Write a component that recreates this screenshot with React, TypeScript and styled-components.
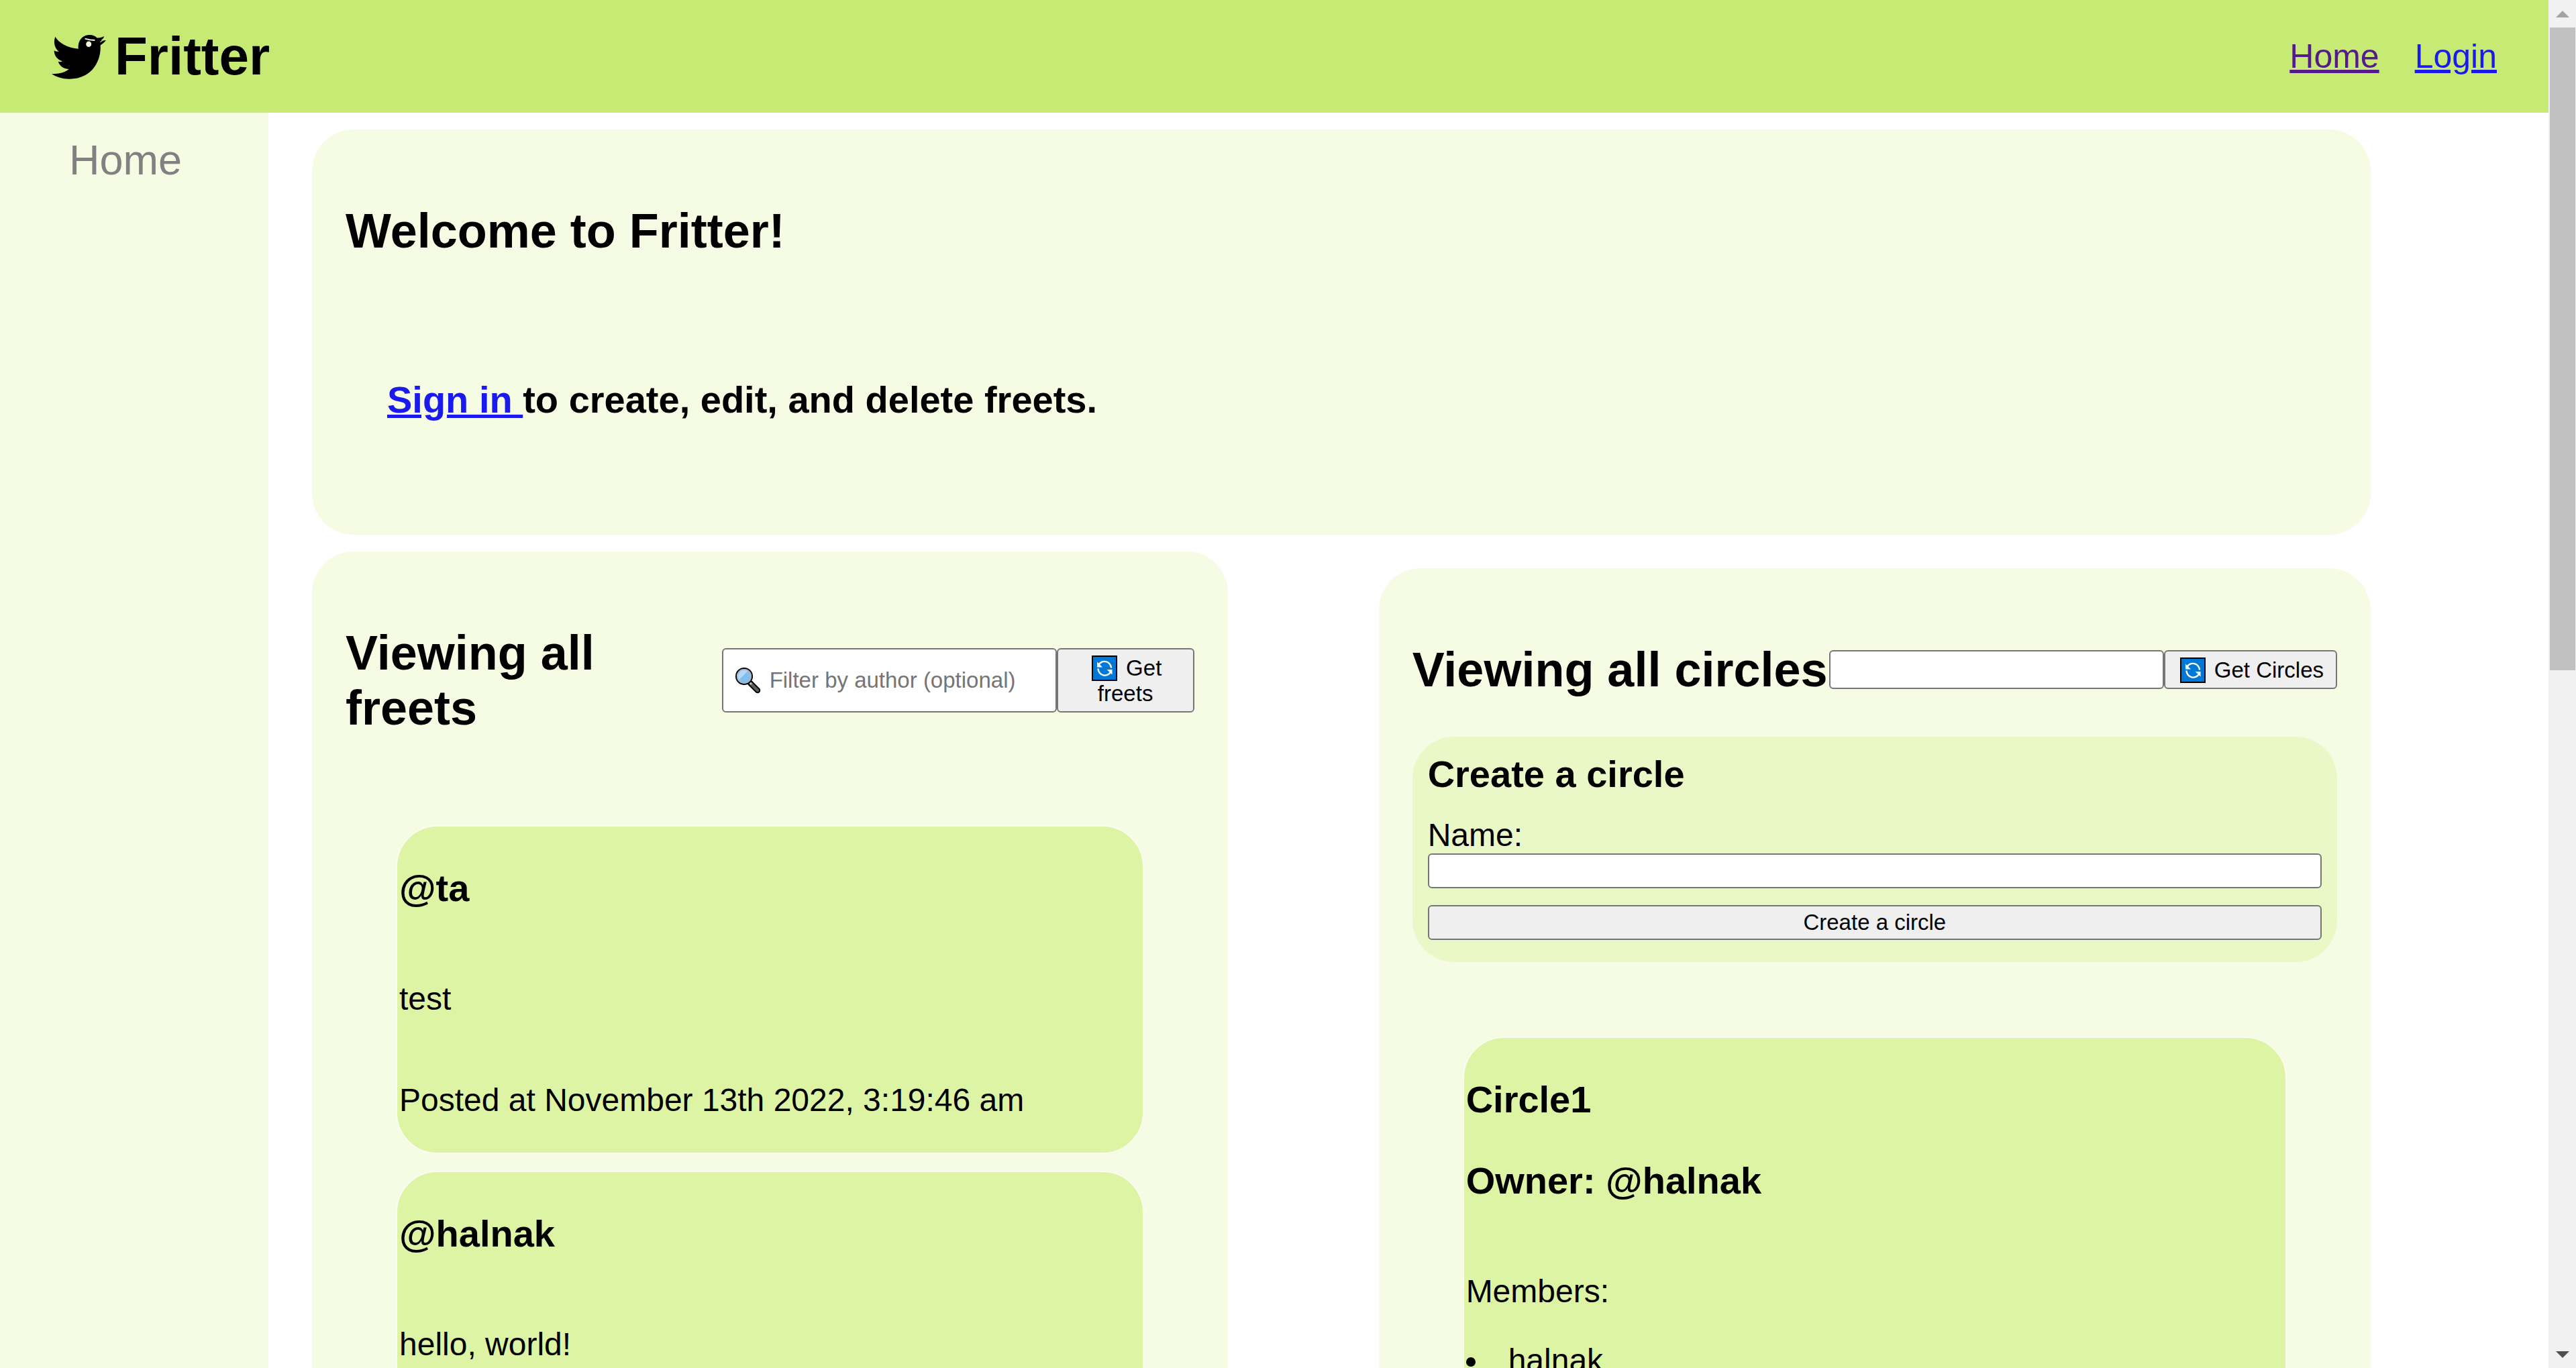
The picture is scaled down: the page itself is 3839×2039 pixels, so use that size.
import React from "react";
import styled, { createGlobalStyle } from "styled-components";

const GlobalStyle = createGlobalStyle`
  * {
    box-sizing: border-box;
  }
  body {
    margin: 0;
    background: #ffffff;
    color: #000000;
    font-family: Arial, "Liberation Sans", Helvetica, sans-serif;
    font-size: 48px;
    line-height: 55px;
  }
`;

const Window = styled.div`
  display: flex;
  height: 100vh;
  overflow: hidden;
`;

const Page = styled.div`
  flex: 1;
  min-width: 0;
  display: flex;
  flex-direction: column;
`;

const Header = styled.header`
  flex: none;
  display: flex;
  align-items: center;
  justify-content: space-between;
  height: 168px;
  padding: 0 77px;
  background: #c6ea74;
`;

const Brand = styled.div`
  display: flex;
  align-items: center;
  gap: 13px;
`;

const BrandName = styled.h1`
  margin: 0;
  font-size: 80px;
  line-height: 92px;
`;

const TopNav = styled.nav`
  display: flex;
  gap: 53px;
  font-size: 50px;
`;

const TextLink = styled.a<{ $visited?: boolean }>`
  color: ${(p) => (p.$visited ? "#551a8b" : "#1a1aee")};
`;

const Body = styled.div`
  flex: 1;
  min-height: 0;
  display: flex;
`;

const Sidebar = styled.aside`
  flex: none;
  width: 400px;
  padding: 34px 103px;
  background: #f6fbe3;
`;

const SideLink = styled.a`
  color: #818181;
  font-size: 63px;
  line-height: 72px;
  text-decoration: none;
`;

const Main = styled.main`
  flex: 1;
  min-width: 0;
  display: flex;
  flex-direction: column;
  gap: 25px;
  padding: 25px 265px 0 65px;
`;

const Card = styled.section`
  padding: 50px;
  border-radius: 62px;
  background: #f6fbe3;
`;

const Columns = styled.div`
  display: grid;
  grid-template-columns: 12fr 13fr;
  gap: 225px;
  align-items: start;
`;

const CirclesCard = styled(Card)`
  margin-top: 25px;
`;

const Title = styled.h2`
  flex: 1;
  margin: 0;
  font-size: 72px;
  line-height: 82px;
`;

const WelcomeTitle = styled(Title)`
  margin: 60px 0;
`;

const Intro = styled.article`
  padding: 62px 62px 63px;
`;

const Subtitle = styled.h3`
  margin: 56px 0;
  font-size: 56px;
  line-height: 65px;
`;

const CardHeader = styled.div`
  display: flex;
  align-items: center;
  margin: 60px 0 59px;
`;

const FilterForm = styled.form`
  display: flex;
`;

const SearchBox = styled.div`
  position: relative;
  display: flex;
  width: 499px;
`;

const SearchMark = styled.span`
  position: absolute;
  top: 0;
  bottom: 0;
  left: 19px;
  display: flex;
  align-items: center;
`;

const TextInput = styled.input<{ $icon?: boolean }>`
  width: 100%;
  min-height: 52px;
  margin: 0;
  padding: 0 5px 0 ${(p) => (p.$icon ? "69px" : "5px")};
  border: 2px solid #767676;
  border-radius: 6px;
  background: #ffffff;
  color: #000000;
  font-family: inherit;
  font-size: 33px;
  line-height: 38px;

  &::placeholder {
    color: #757575;
    opacity: 1;
  }
`;

const Button = styled.button<{ $width?: string }>`
  width: ${(p) => p.$width ?? "100%"};
  padding: 9px 18px 7px;
  border: 2px solid #767676;
  border-radius: 6px;
  background: #efefef;
  color: #000000;
  font-family: inherit;
  font-size: 33px;
  line-height: 38px;
`;

const WideButton = styled(Button)`
  margin-top: 25px;
  padding: 5px 15px;
`;

const RefreshMark = styled.svg`
  width: 38px;
  height: 38px;
  margin: 0 4px;
  vertical-align: -8px;
`;

const CreateForm = styled.form`
  display: flex;
  flex-direction: column;
  padding: 23px 23px 33px;
  border-radius: 62px;
  background: #eaf8c8;
`;

const FormTitle = styled.h3`
  margin: 0 0 31px;
  font-size: 56px;
  line-height: 65px;
`;

const List = styled.div<{ $top?: number }>`
  display: flex;
  flex-direction: column;
  gap: 25px;
  padding: ${(p) => p.$top ?? 75}px 75px 75px;
`;

const Item = styled.article`
  padding: 3px;
  border: 2px solid #fafdf0;
  border-radius: 62px;
  background: #dcf4a3;
`;

const Content = styled.p`
  margin: 105px 0 96px;
`;

const Info = styled.p`
  margin: 0 0 48px;
`;

const Members = styled.ul`
  margin: -48px 0 48px;
  padding: 0;
  list-style: disc inside;
`;

const Scrollbar = styled.div`
  flex: none;
  width: 41px;
  display: flex;
  flex-direction: column;
  justify-content: space-between;
  padding: 0 1px 0 2px;
  background: #f1f1f1;
`;

const Thumb = styled.div`
  height: 47%;
  margin-bottom: auto;
  background: #c1c1c1;
`;

const Arrow = styled.svg`
  flex: none;
  display: block;
  width: 38px;
  height: 41px;
`;

const Bird = () => (
  <svg width="81" height="67" viewBox="50 40 242 200" aria-hidden="true">
    <path d="M66 51C80 78 122 101 169 105C165 68 188 43 219 43C233 43 244 48 252 56C264 57 275 53 284 49C281 58 276 63 269 68C277 69 284 68 292 67C286 75 276 83 267 89C272 150 235 239 128 239C98 239 70 230 50 216C84 216 110 211 127 195C104 196 86 183 79 162C86 164 93 163 98 160C76 153 61 136 61 112C68 117 76 117 82 117C62 101 57 75 66 51Z" />
    <ellipse cx="215" cy="84" rx="12" ry="13" fill="#f6fbe3" />
    <path d="M198 57Q222 64 243 64L242 70Q219 69 198 62Z" fill="#f6fbe3" />
    <path d="M266 75L283 64" stroke="#c6ea74" strokeWidth="3" />
  </svg>
);

const Refresh = () => (
  <RefreshMark viewBox="0 0 38 38" aria-hidden="true">
    <rect x="1" y="1" width="36" height="36" fill="#0078d7" stroke="#000000" strokeWidth="2" />
    <g fill="none" stroke="#ffffff" strokeWidth="2.4">
      <path d="M10 14.5A10 10 0 0 1 29 18.500" />
      <path d="M9.500 19.500A10 10 0 0 0 28.500 24" />
    </g>
    <path d="M8 9.500V17.500H16Z M30.500 28.500V21H22.500Z" fill="#ffffff" />
  </RefreshMark>
);

const Magnifier = () => (
  <svg width="40" height="40" viewBox="0 0 40 40" aria-hidden="true">
    <path d="M23 24L34 35" stroke="#000000" strokeWidth="8.500" strokeLinecap="round" />
    <path d="M24 25L34 35" stroke="#566064" strokeWidth="4.500" strokeLinecap="round" />
    <path d="M21.500 22.500L25 26" stroke="#b4bdc4" strokeWidth="3" />
    <circle cx="14" cy="14" r="12" fill="#83beec" stroke="#000000" strokeWidth="2" />
    <path d="M5.500 20A10.400 10.400 0 0 1 20 5.500Z" fill="#b3daf7" />
    <circle cx="14" cy="14" r="10.200" fill="none" stroke="#a9b3c4" strokeWidth="1.800" />
  </svg>
);

const freets = [
  { author: "ta", content: "test", date: "November 13th 2022, 3:19:46 am" },
  { author: "halnak", content: "hello, world!", date: "November 13th 2022, 3:12:08 am" },
];

const circles = [{ name: "Circle1", owner: "halnak", members: ["halnak"] }];

export default function App() {
  return (
    <Window>
      <GlobalStyle />
      <Page>
        <Header>
          <Brand>
            <Bird />
            <BrandName>Fritter</BrandName>
          </Brand>
          <TopNav>
            <TextLink href="#home" $visited>Home</TextLink>
            <TextLink href="#login">Login</TextLink>
          </TopNav>
        </Header>
        <Body>
          <Sidebar>
            <SideLink href="#home">Home</SideLink>
          </Sidebar>
          <Main>
            <Card>
              <WelcomeTitle>Welcome to Fritter!</WelcomeTitle>
              <Intro>
                <Subtitle>
                  <TextLink href="#login">Sign in </TextLink>
                  to create, edit, and delete freets.
                </Subtitle>
              </Intro>
            </Card>
            <Columns>
              <Card>
                <CardHeader>
                  <Title>Viewing all freets</Title>
                  <FilterForm>
                    <SearchBox>
                      <TextInput $icon aria-label="Filter by author" placeholder="Filter by author (optional)" />
                      <SearchMark>
                        <Magnifier />
                      </SearchMark>
                    </SearchBox>
                    <Button type="button" $width="205px">
                      <Refresh /> Get freets
                    </Button>
                  </FilterForm>
                </CardHeader>
                <List>
                  {freets.map((f) => (
                    <Item key={f.author}>
                      <Subtitle>@{f.author}</Subtitle>
                      <Content>{f.content}</Content>
                      <Info>Posted at {f.date}</Info>
                    </Item>
                  ))}
                </List>
              </Card>
              <CirclesCard>
                <CardHeader>
                  <Title>Viewing all circles</Title>
                  <FilterForm>
                    <SearchBox>
                      <TextInput aria-label="Filter circles" />
                    </SearchBox>
                    <Button type="button" $width="auto">
                      <Refresh /> Get Circles
                    </Button>
                  </FilterForm>
                </CardHeader>
                <CreateForm>
                  <FormTitle>Create a circle</FormTitle>
                  <label htmlFor="circle-name">Name:</label>
                  <TextInput id="circle-name" />
                  <WideButton type="button">Create a circle</WideButton>
                </CreateForm>
                <List $top={111}>
                  {circles.map((c) => (
                    <Item key={c.name}>
                      <Subtitle>{c.name}</Subtitle>
                      <Subtitle>Owner: @{c.owner}</Subtitle>
                      <Content>Members:</Content>
                      <Members>
                        {c.members.map((m) => (
                          <li key={m}>{m}</li>
                        ))}
                      </Members>
                    </Item>
                  ))}
                </List>
              </CirclesCard>
            </Columns>
          </Main>
        </Body>
      </Page>
      <Scrollbar aria-hidden="true">
        <Arrow viewBox="0 0 38 41">
          <path d="M9 26L19 16L29 26Z" fill="#a3a3a3" />
        </Arrow>
        <Thumb />
        <Arrow viewBox="0 0 38 41">
          <path d="M9 16L19 26L29 16Z" fill="#505050" />
        </Arrow>
      </Scrollbar>
    </Window>
  );
}
